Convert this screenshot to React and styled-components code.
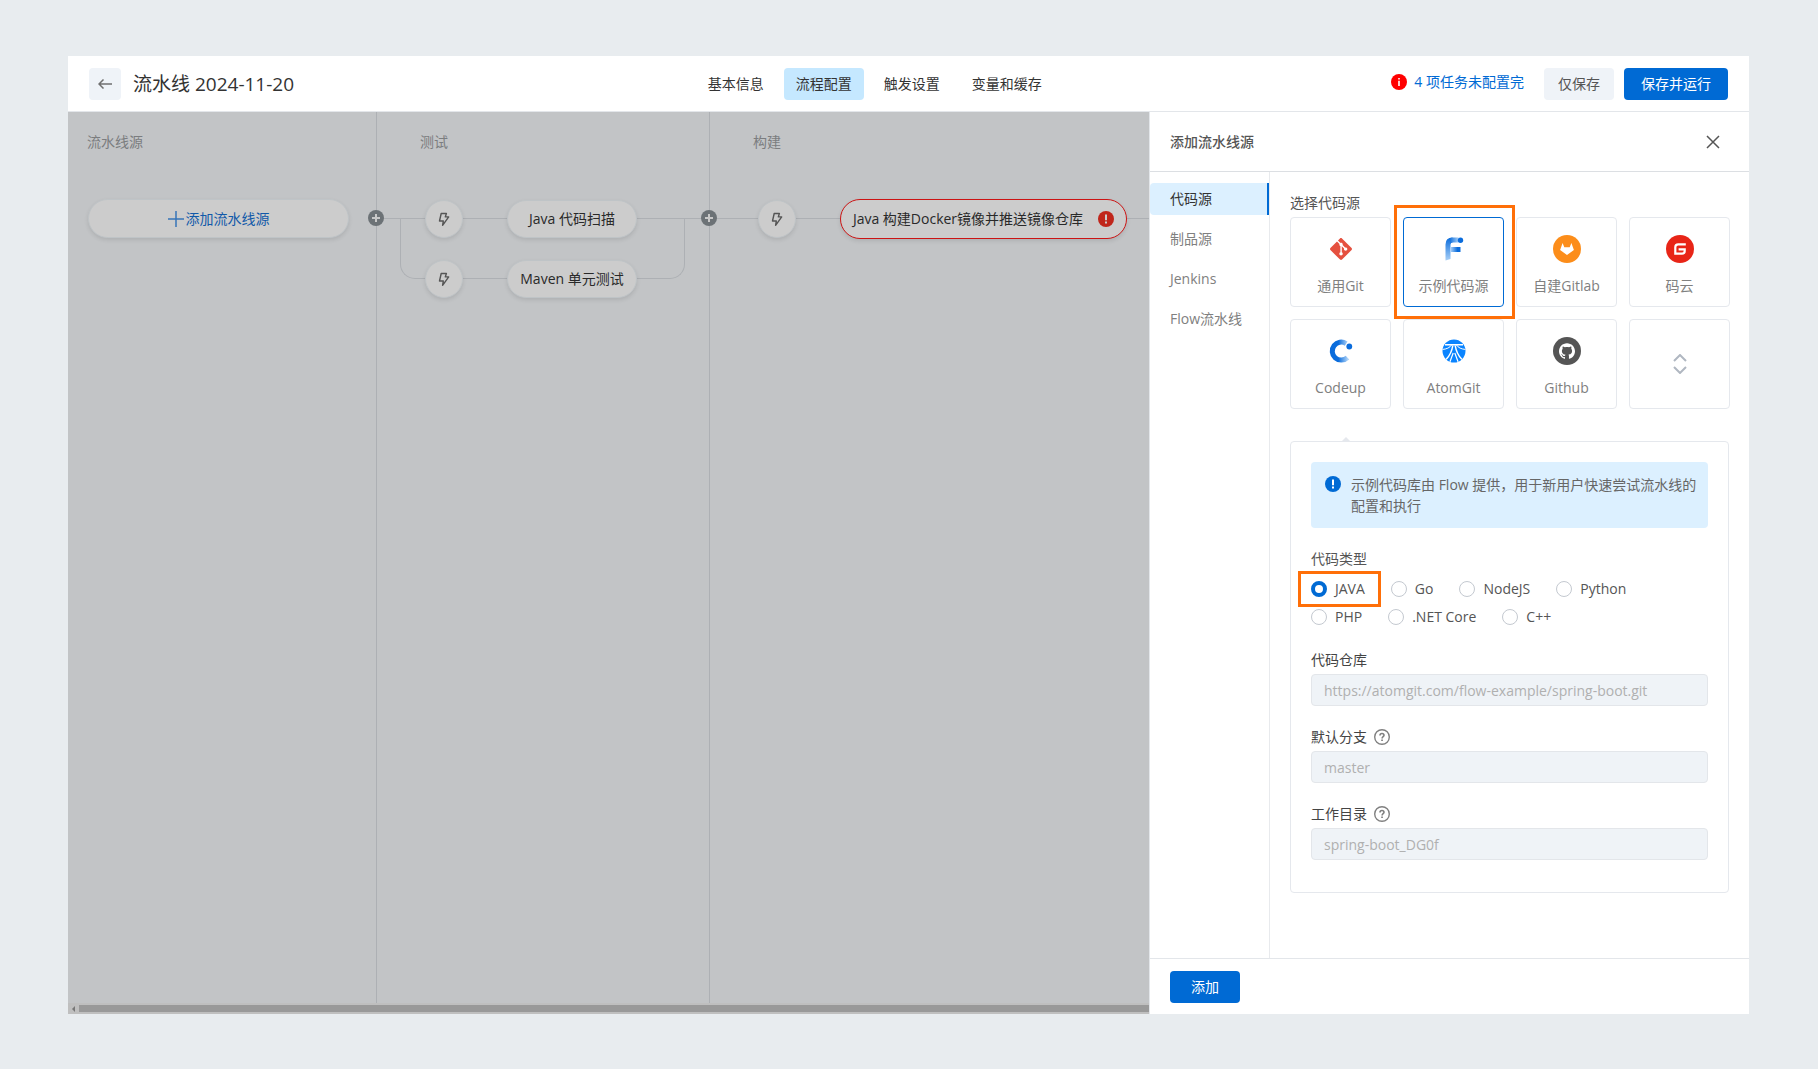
import { useState } from "react";
import styled, { createGlobalStyle, css } from "styled-components";
import { SiGit, SiGithub } from "react-icons/si";

const GlobalStyle = createGlobalStyle`
  * {
    box-sizing: border-box;
  }
  body {
    margin: 0;
    background: #e8ecef;
    color: #333;
    font-family: "Open Sans", "Noto Sans CJK SC", sans-serif;
    font-size: 14px;
    line-height: 20px;
  }
  button, input {
    font: inherit;
  }
  h1, h2, h3, p {
    margin: 0;
    font-weight: 400;
  }
`;

const Page = styled.div`
  min-height: 100vh;
  padding: 56px 69px 55px 68px;
  display: flex;
`;

const Window = styled.div`
  flex: 1;
  min-width: 0;
  display: flex;
  flex-direction: column;
  background: #fff;
`;

/* ---------- header ---------- */

const Header = styled.header`
  height: 56px;
  padding: 0 21px;
  display: flex;
  align-items: center;
  border-bottom: 1px solid #e3e6ea;
`;

const HeaderLeft = styled.div`
  flex: 9 0 0;
  display: flex;
  align-items: center;
  gap: 12px;
  h1 {
    font-size: 19px;
    line-height: 28px;
  }
`;

const HeaderRight = styled.div`
  flex: 10 0 0;
  display: flex;
  align-items: center;
  justify-content: flex-end;
  gap: 10px;
`;

const BackButton = styled.button`
  width: 32px;
  height: 32px;
  padding: 0;
  border: 0;
  border-radius: 4px;
  background: #eff3f8;
  display: flex;
  align-items: center;
  justify-content: center;
  cursor: pointer;
`;

const Tabs = styled.nav`
  display: flex;
  gap: 8px;
`;

const Tab = styled.a`
  padding: 6px 12px;
  border-radius: 4px;
  color: #333;
  text-decoration: none;
  background: ${({ $active }) => ($active ? "#c5e8ff" : "transparent")};
`;

const Pending = styled.a`
  display: flex;
  align-items: center;
  gap: 7px;
  margin-right: 10px;
  padding-bottom: 4px;
  color: #006ad4;
  text-decoration: none;
`;

const Button = styled.button`
  height: 32px;
  padding: 0 14px;
  border: 0;
  border-radius: 4px;
  background: #eff3f8;
  color: #555;
  cursor: pointer;
  ${({ $primary }) => $primary && css`
    min-width: 70px;
    padding: 0 17px;
    background: #006ad4;
    color: #fff;
  `}
`;

/* ---------- pipeline canvas ---------- */

const Body = styled.div`
  flex: 1;
  display: flex;
  min-height: 0;
`;

const Canvas = styled.main`
  flex: 1;
  min-width: 0;
  overflow: hidden;
  display: flex;
  flex-direction: column;
  background: #c2c4c6;
`;

const Stages = styled.div`
  flex: 1;
  display: flex;
`;

const Stage = styled.section`
  flex: ${({ $width }) => ($width ? `0 0 ${$width}px` : "1 0 0")};
  padding-top: 20px;
  border-right: ${({ $width }) => ($width ? "1px solid #adb0b4" : "0")};
  h2 {
    padding-left: ${({ $indent }) => $indent}px;
    font-size: 14px;
    color: #7b7d7f;
  }
`;

const Lane = styled.div`
  position: relative;
  margin-top: 47px;
  padding-left: ${({ $indent }) => $indent || 0}px;
  display: flex;
  flex-direction: column;
  gap: 20px;
`;

const Row = styled.div`
  position: relative;
  height: 40px;
  display: flex;
  align-items: center;
`;

const Link = styled.span`
  height: 1px;
  margin-bottom: 1px;
  background: ${({ $blank }) => ($blank ? "transparent" : "#adb0b4")};
  flex: ${({ $width }) => ($width ? `0 0 ${$width}px` : "1")};
`;

/* bends from the row above down to this one */
const Elbow = styled.span`
  position: absolute;
  bottom: 20px;
  height: 60px;
  border-bottom: 1px solid #adb0b4;
  ${({ $side }) => $side === "left" ? css`
    left: 23px;
    width: 25px;
    border-left: 1px solid #adb0b4;
    border-bottom-left-radius: 15px;
  ` : css`
    right: 24px;
    width: 49px;
    border-right: 1px solid #adb0b4;
    border-bottom-right-radius: 15px;
  `}
`;

const nodeLook = css`
  height: 38px;
  padding: 0;
  border: 1px solid #bfc4c7;
  border-radius: 20px;
  background: #ccc;
  box-shadow: 0 2px 4px rgba(0, 0, 0, .1);
  display: flex;
  align-items: center;
  justify-content: center;
  cursor: pointer;
  z-index: 1;
`;

const Trigger = styled.button`
  ${nodeLook}
  flex: 0 0 38px;
`;

const Task = styled.button`
  ${nodeLook}
  flex: 0 0 ${({ $width }) => $width}px;
  gap: 15px;
  color: #292929;
  white-space: nowrap;
  ${({ $error }) => $error && css`
    height: 40px;
    border-color: #cc1414;
  `}
`;

const AddSource = styled(Task)`
  align-self: flex-start;
  height: 39px;
  gap: 2px;
  color: #1159a9;
`;

const AddStage = styled.button`
  position: absolute;
  top: 11px;
  right: -8px;
  width: 16px;
  height: 16px;
  padding: 0;
  border: 0;
  border-radius: 50%;
  background: #6c7276;
  display: flex;
  align-items: center;
  justify-content: center;
  z-index: 1;
`;

const Scrollbar = styled.div`
  height: 11px;
  padding: 2px 0 2px 4px;
  display: flex;
  align-items: center;
  gap: 4px;
  background: #bfbfbf;
  span {
    flex: 1;
    height: 7px;
    background: #999;
  }
`;

/* ---------- side panel ---------- */

const Panel = styled.aside`
  flex: 0 0 600px;
  display: flex;
  flex-direction: column;
  border-left: 1px solid #e3e6ea;
  background: #fff;
`;

const PanelHead = styled.div`
  height: 60px;
  padding: 0 29px 0 20px;
  display: flex;
  align-items: center;
  justify-content: space-between;
  border-bottom: 1px solid #dcdfe3;
  h2 {
    font-size: 14px;
    font-weight: 500;
    color: #555;
  }
  button {
    padding: 0;
    border: 0;
    background: none;
    display: flex;
    cursor: pointer;
  }
`;

const PanelBody = styled.div`
  flex: 1;
  display: flex;
`;

const SideNav = styled.nav`
  flex: 0 0 120px;
  padding-top: 11px;
  border-right: 1px solid #e8eaed;
  display: flex;
  flex-direction: column;
  gap: 8px;
`;

const SideItem = styled.a`
  padding: 6px 0 6px 20px;
  text-decoration: none;
  color: #808080;
  ${({ $active }) => $active && css`
    color: #333;
    background: #dcf0ff;
    border-right: 2px solid #006ad4;
    border-radius: 4px 0 0 4px;
  `}
`;

const Content = styled.div`
  flex: 1;
  min-width: 0;
  padding: 21px 19px 0 20px;
  h3 {
    font-size: 14px;
    color: #555;
  }
`;

const Cards = styled.div`
  margin-top: 4px;
  display: grid;
  grid-template-columns: repeat(4, 1fr);
  gap: 12px;
`;

const Card = styled.button`
  position: relative;
  height: 90px;
  padding: 17px 0 0;
  border: 1px solid ${({ $selected }) => ($selected ? "#006ad4" : "#e5e8ed")};
  border-radius: 4px;
  background: #fff;
  color: #808080;
  display: flex;
  flex-direction: column;
  align-items: center;
  gap: 13px;
  cursor: pointer;
  svg {
    flex: none;
  }
`;

const ExpandCard = styled(Card)`
  padding: 0;
  justify-content: center;
`;

const Mark = styled.span`
  position: absolute;
  inset: ${({ $inset }) => $inset};
  border: 3px solid #ff6f08;
  pointer-events: none;
`;

const Disc = styled.span`
  width: 28px;
  height: 28px;
  border-radius: 50%;
  background: ${({ $color }) => $color || "transparent"};
  display: flex;
  align-items: center;
  justify-content: center;
`;

const Detail = styled.div`
  position: relative;
  margin: 32px 1px 0 0;
  padding: 20px 20px 32px;
  border: 1px solid #e5e8ed;
  border-radius: 4px;
  display: flex;
  flex-direction: column;
  gap: 21px;
  &::before {
    content: "";
    position: absolute;
    left: 50px;
    bottom: 100%;
    border: 5px solid transparent;
    border-top: 0;
    border-bottom-color: #e5e8ed;
  }
`;

const Notice = styled.div`
  padding: 12px 10px 12px 14px;
  border-radius: 4px;
  background: #dcf0ff;
  color: #666;
  line-height: 21px;
  display: flex;
  gap: 10px;
  svg {
    flex: none;
    margin-top: 2px;
  }
`;

const RadioGroup = styled.fieldset`
  margin: 0;
  padding: 0 0 2px;
  border: 0;
  display: flex;
  flex-direction: column;
  gap: 8px;
  legend {
    padding: 0 0 10px;
    color: #555;
  }
`;

const RadioRow = styled.div`
  display: flex;
  gap: 26px;
`;

const RadioLabel = styled.label`
  position: relative;
  display: flex;
  align-items: center;
  gap: 8px;
  color: #555;
  input {
    appearance: none;
    width: 16px;
    height: 16px;
    margin: 0;
    border: 1px solid #c4c9d0;
    border-radius: 50%;
    background: #fff;
  }
  input:checked {
    border: 4px solid #006ad4;
  }
`;

const Field = styled.div`
  display: flex;
  flex-direction: column;
  gap: 4px;
  label {
    display: flex;
    align-items: center;
    gap: 7px;
    color: #444;
  }
  input {
    width: 100%;
    height: 32px;
    padding: 0 12px;
    border: 1px solid #e3e6ea;
    border-radius: 4px;
    background: #eff3f7;
    color: #b0b0b0;
  }
`;

const PanelFoot = styled.div`
  height: 56px;
  padding: 0 20px;
  display: flex;
  align-items: center;
  border-top: 1px solid #e3e6ea;
`;

/* ---------- icons ---------- */

const Bolt = () => (
  <svg width="12" height="14" viewBox="0 0 12 14" fill="none" stroke="#555" strokeWidth="1.4" strokeLinejoin="round">
    <path d="M3.2 1.5h5.2L7.3 4.9h3.400L4.600 13.300l.7-4.300H1.500z" />
  </svg>
);

const Plus = ({ size, color, width }) => (
  <svg width={size} height={size} viewBox="0 0 16 16" stroke={color} strokeWidth={width}>
    <path d="M8 0v16M0 8h16" />
  </svg>
);

const Alert = ({ color, mark = "#fff" }) => (
  <svg width="16" height="16" viewBox="0 0 16 16">
    <circle cx="8" cy="8" r="8" fill={color} />
    <path d="M7 3.6h2v5.6H7zM7 10.6h2v1.8H7z" fill={mark} />
  </svg>
);

const Info = () => (
  <svg width="16" height="16" viewBox="0 0 16 16">
    <circle cx="8" cy="8" r="8" fill="#f00" />
    <path d="M7.2 4h1.6v1.6H7.2zM7.2 6.8h1.6v5.2H7.2z" fill="#fff" />
  </svg>
);

const Help = () => (
  <svg width="16" height="16" viewBox="0 0 16 16" fill="none" stroke="#808080" strokeWidth="1.4">
    <circle cx="8" cy="8" r="7.3" />
    <path d="M6 6.4c0-1.2.9-1.9 2-1.9s2 .7 2 1.8c0 1.3-1.9 1.5-1.9 3.1" strokeWidth="1.6" />
    <path d="M7.2 10.6h1.7v1.5H7.2z" fill="#808080" stroke="none" />
  </svg>
);

const FlowLogo = () => (
  <svg width="28" height="28" viewBox="0 0 28 28">
    <defs>
      <linearGradient id="flowTop" x1="0" y1="0" x2="1" y2="0">
        <stop offset="0" stopColor="#0a6cdc" />
        <stop offset="1" stopColor="#a9d0f7" />
      </linearGradient>
      <linearGradient id="flowStem" x1="0" y1="0" x2="0" y2="1">
        <stop offset="0" stopColor="#0a6cdc" />
        <stop offset="1" stopColor="#a9d0f7" />
      </linearGradient>
      <linearGradient id="flowBar" x1="0" y1="0" x2="1" y2="0">
        <stop offset="0" stopColor="#a9d0f7" />
        <stop offset=".7" stopColor="#0a6cdc" />
      </linearGradient>
    </defs>
    <path d="M5.5 25.5V9.5q0-7 7-7V7.5q-2 0-2 2v14.5z" fill="url(#flowStem)" />
    <path d="M9.5 3.2q1.5-.7 3-.7h6.2q-1.6 2.5 0 5H12.5q-2 0-2 2z" fill="url(#flowTop)" />
    <path d="M10.5 12h10v5h-10z" fill="url(#flowBar)" />
    <circle cx="20.5" cy="5.2" r="2.7" fill="#0a6cdc" />
  </svg>
);

const CodeupLogo = () => (
  <svg width="28" height="28" viewBox="0 0 28 28">
    <defs>
      <linearGradient id="codeupArc" x1="0" y1="0" x2="1" y2="0">
        <stop offset="0" stopColor="#0a6cdc" />
        <stop offset=".4" stopColor="#0a6cdc" />
        <stop offset="1" stopColor="#a9d0f7" />
      </linearGradient>
    </defs>
    <path d="M19.2 6.6A9 9 0 1 0 20.5 20.6" fill="none" stroke="url(#codeupArc)" strokeWidth="5" />
    <circle cx="22.3" cy="9.5" r="2.9" fill="#0a6cdc" />
  </svg>
);

const AtomGitLogo = () => (
  <svg width="28" height="28" viewBox="0 0 28 28">
    <clipPath id="atomDisc">
      <circle cx="14" cy="14" r="11.5" />
    </clipPath>
    <g clipPath="url(#atomDisc)" fill="none" stroke="#fff">
      <path d="M2 2h24v24H2z" fill="#0a84ff" stroke="none" />
      <path d="M5 7.8h18" strokeWidth="1.4" />
      <path d="M11.5 8Q9 12 2 12.5M16.5 8Q19 12 26 12.5" strokeWidth="1" />
      <path d="M12.8 8.5Q11.5 17 6 22.5M15.2 8.5Q16.5 17 22 22.5" strokeWidth="1.5" />
      <path d="M13.2 16L9.500 26M14.800 16l3.700 10" strokeWidth="1.200" />
    </g>
  </svg>
);

const GitlabFox = () => (
  <svg width="14" height="12" viewBox="0 0 14 12" fill="#fff">
    <path d="M2.6 0l1.7 4.3h5.4L11.4 0l2.5 7L7 12 .1 7z" />
  </svg>
);

const GiteeLogo = () => (
  <svg width="28" height="28" viewBox="0 0 28 28" fill="none">
    <circle cx="14" cy="14" r="14" fill="#e82517" />
    <path d="M19.8 9.4h-7.600q-2.900 0-2.900 2.900v6.400h6.700q2.700 0 2.700-2.700v-1.700h-6.100" stroke="#fff" strokeWidth="2.200" />
  </svg>
);

const Close = () => (
  <svg width="14" height="14" viewBox="0 0 14 14" stroke="#555" strokeWidth="1.5">
    <path d="M1 1l12 12M13 1L1 13" />
  </svg>
);

const Expand = () => (
  <svg width="14" height="20" viewBox="0 0 14 20" fill="none" stroke="#b0b7c1" strokeWidth="2">
    <path d="M1 7l6-6 6 6M1 13l6 6 6-6" />
  </svg>
);

const sources = [
  { name: "通用Git", icon: <Disc><SiGit size={22} color="#e5503f" /></Disc> },
  { name: "示例代码源", icon: <FlowLogo /> },
  { name: "自建Gitlab", icon: <Disc $color="#fc8d1a"><GitlabFox /></Disc> },
  { name: "码云", icon: <GiteeLogo /> },
  { name: "Codeup", icon: <CodeupLogo /> },
  { name: "AtomGit", icon: <AtomGitLogo /> },
  { name: "Github", icon: <Disc $color="#555"><SiGithub size={16} color="#fff" /></Disc> },
];

const languages = [
  ["JAVA", "Go", "NodeJS", "Python"],
  ["PHP", ".NET Core", "C++"],
];

const fields = [
  { id: "repo", label: "代码仓库", value: "https://atomgit.com/flow-example/spring-boot.git" },
  { id: "branch", label: "默认分支", value: "master", help: true },
  { id: "dir", label: "工作目录", value: "spring-boot_DG0f", help: true },
];

const tabs = ["基本信息", "流程配置", "触发设置", "变量和缓存"];
const kinds = ["代码源", "制品源", "Jenkins", "Flow流水线"];

const Pipeline = () => (
  <Canvas>
    <Stages>
      <Stage $width={309} $indent={19}>
        <h2>流水线源</h2>
        <Lane $indent={20}>
          <Row>
            <AddSource $width={261}>
              <Plus size={16} color="#3674b8" width={1.5} />
              添加流水线源
            </AddSource>
          </Row>
          <AddStage aria-label="添加阶段"><Plus size={8} color="#c8c8c8" width={4} /></AddStage>
        </Lane>
      </Stage>
      <Stage $width={333} $indent={43}>
        <h2>测试</h2>
        <Lane>
          <Row>
            <Link $width={48} />
            <Trigger aria-label="触发"><Bolt /></Trigger>
            <Link $width={44} />
            <Task $width={130}>Java 代码扫描</Task>
            <Link />
          </Row>
          <Row>
            <Elbow $side="left" />
            <Link $width={48} $blank />
            <Trigger aria-label="触发"><Bolt /></Trigger>
            <Link $width={44} />
            <Task $width={130}>Maven 单元测试</Task>
            <Elbow $side="right" />
          </Row>
          <AddStage aria-label="添加阶段"><Plus size={8} color="#c8c8c8" width={4} /></AddStage>
        </Lane>
      </Stage>
      <Stage $indent={43}>
        <h2>构建</h2>
        <Lane>
          <Row>
            <Link $width={48} />
            <Trigger aria-label="触发"><Bolt /></Trigger>
            <Link $width={44} />
            <Task $width={287} $error>
              Java 构建Docker镜像并推送镜像仓库
              <Alert color="#c0261b" mark="#ccc" />
            </Task>
            <Link />
          </Row>
        </Lane>
      </Stage>
    </Stages>
    <Scrollbar>
      <svg width="3" height="6" viewBox="0 0 3 6"><path d="M3 0v6L0 3z" fill="#777" /></svg>
      <span />
    </Scrollbar>
  </Canvas>
);

const SourcePanel = () => {

  const [source, setSource] = useState("示例代码源")
  const [lang, setLang] = useState("JAVA")

  return (
    <Panel>
      <PanelHead>
        <h2>添加流水线源</h2>
        <button aria-label="关闭"><Close /></button>
      </PanelHead>
      <PanelBody>
        <SideNav>
          {kinds.map((k, i) => <SideItem key={k} href="#" $active={i === 0}>{k}</SideItem>)}
        </SideNav>
        <Content>
          <h3>选择代码源</h3>
          <Cards>
            {sources.map(({ name, icon }) => (
              <Card key={name} $selected={source === name} onClick={() => setSource(name)}>
                {icon}
                {name}
                {source === name && <Mark $inset="-13px -12px -13px -10px" />}
              </Card>
            ))}
            <ExpandCard aria-label="展开"><Expand /></ExpandCard>
          </Cards>
          <Detail>
            <Notice>
              <Alert color="#006ad4" />
              <p>示例代码库由 Flow 提供，用于新用户快速尝试流水线的配置和执行</p>
            </Notice>
            <RadioGroup>
              <legend>代码类型</legend>
              {languages.map((row, i) => (
                <RadioRow key={i}>
                  {row.map((l) => (
                    <RadioLabel key={l}>
                      <input type="radio" name="lang" checked={lang === l} onChange={() => setLang(l)} />
                      {l}
                      {lang === l && <Mark $inset="-8px -16px -8px -13px" />}
                    </RadioLabel>
                  ))}
                </RadioRow>
              ))}
            </RadioGroup>
            {fields.map(({ id, label, value, help }) => (
              <Field key={id}>
                <label htmlFor={id}>{label}{help && <Help />}</label>
                <input id={id} type="text" value={value} disabled />
              </Field>
            ))}
          </Detail>
        </Content>
      </PanelBody>
      <PanelFoot>
        <Button $primary>添加</Button>
      </PanelFoot>
    </Panel>
  );
};

const App = () => (
  <Page>
    <GlobalStyle />
    <Window>
      <Header>
        <HeaderLeft>
          <BackButton aria-label="返回">
            <svg width="14" height="10" viewBox="0 0 14 10" fill="none" stroke="#707070" strokeWidth="1.5">
              <path d="M14 5H1.5M5.5 .5L1 5l4.5 4.5" />
            </svg>
          </BackButton>
          <h1>流水线 2024-11-20</h1>
        </HeaderLeft>
        <Tabs>
          {tabs.map((t, i) => <Tab key={t} href="#" $active={i === 1}>{t}</Tab>)}
        </Tabs>
        <HeaderRight>
          <Pending href="#"><Info />4 项任务未配置完</Pending>
          <Button>仅保存</Button>
          <Button $primary>保存并运行</Button>
        </HeaderRight>
      </Header>
      <Body>
        <Pipeline />
        <SourcePanel />
      </Body>
    </Window>
  </Page>
);

export default App;
